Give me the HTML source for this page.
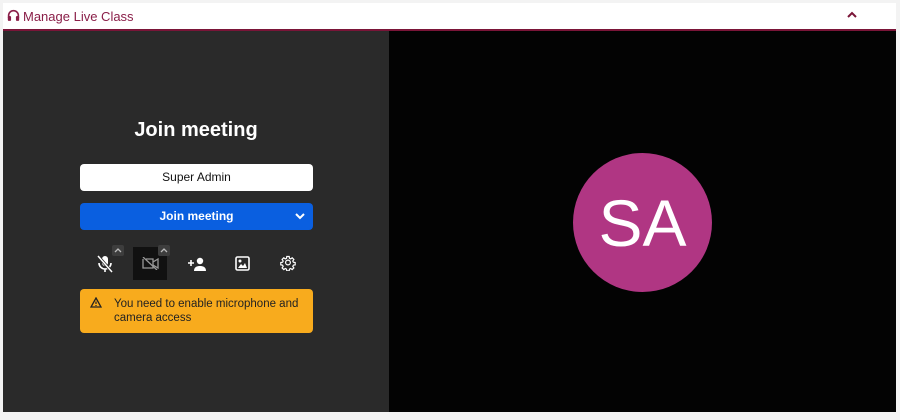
<!DOCTYPE html>
<html><head><style>
body{margin:0;width:900px;height:420px;background:#f3f3f3;font-family:"Liberation Sans",sans-serif;position:relative;overflow:hidden}
.hdr{position:absolute;left:3px;top:3px;width:893px;height:26px;background:#fff;border-bottom:2px solid #7a1538}
.hdr span{position:absolute;left:20px;top:6px;font-size:13px;color:#8a1e48}
.l{position:absolute;left:3px;top:31px;width:386px;height:381px;background:#2a2a2a}
.r{position:absolute;left:389px;top:31px;width:507px;height:381px;background:#030303}
.ab{position:absolute}
</style></head><body>
<div class="hdr">
<svg class="ab" style="left:4px;top:6px" width="13" height="13" viewBox="0 0 24 24"><path d="M3 16v-4a9 9 0 0 1 18 0v4" fill="none" stroke="#8a1e48" stroke-width="3"/><rect x="1.5" y="13" width="6" height="9" rx="2" fill="#8a1e48"/><rect x="16.5" y="13" width="6" height="9" rx="2" fill="#8a1e48"/></svg>
<span>Manage Live Class</span>
<svg class="ab" style="left:844px;top:8px" width="10" height="7" viewBox="0 0 10 7"><path d="M1 6L5 2L9 6" fill="none" stroke="#7a1538" stroke-width="2"/></svg>
</div>
<div class="l">
<div class="ab" style="left:0;width:386px;top:88px;text-align:center;color:#fff;font-weight:bold;font-size:20px">Join meeting</div>
<div class="ab" style="left:77px;top:133px;width:233px;height:27px;background:#fff;border-radius:4px;text-align:center;line-height:27px;font-size:12px;color:#111">Super Admin</div>
<div class="ab" style="left:77px;top:172px;width:233px;height:27px;background:#0a5fe0;border-radius:4px;text-align:center;line-height:27px;font-size:12px;color:#fff;font-weight:bold">Join meeting
<svg class="ab" style="left:215px;top:10px" width="10" height="7" viewBox="0 0 10 7"><path d="M1 1L5 5L9 1" fill="none" stroke="#fff" stroke-width="2"/></svg></div>
<svg class="ab" style="left:94px;top:224px" width="16" height="18" viewBox="0 0 16 18"><rect x="5" y="1" width="6" height="10" rx="3" fill="#fff"/><path d="M2 8a6 6 0 0 0 12 0M8 14v3" fill="none" stroke="#fff" stroke-width="1.6"/><path d="M1 1L15 17" stroke="#2a2a2a" stroke-width="3"/><path d="M1 1L15 17" stroke="#fff" stroke-width="1.5"/></svg>
<div class="ab" style="left:109px;top:214px;width:12px;height:11px;background:#3d3d3d;border-radius:2px"></div>
<svg class="ab" style="left:111px;top:216px" width="8" height="6"><path d="M1 5L4 2L7 5" fill="none" stroke="#bbb" stroke-width="1.3"/></svg>
<div class="ab" style="left:130px;top:216px;width:34px;height:33px;background:#111"></div>
<svg class="ab" style="left:139px;top:226px" width="17" height="13" viewBox="0 0 17 13"><path d="M4 2h7v9H1V2M11 5l5-3v9l-5-3" fill="none" stroke="#999" stroke-width="1.3"/><path d="M1 0L15 13" stroke="#999" stroke-width="1.3"/></svg>
<div class="ab" style="left:155px;top:214px;width:12px;height:11px;background:#3d3d3d;border-radius:2px"></div>
<svg class="ab" style="left:157px;top:216px" width="8" height="6"><path d="M1 5L4 2L7 5" fill="none" stroke="#bbb" stroke-width="1.3"/></svg>
<svg class="ab" style="left:185px;top:226px" width="18" height="14" viewBox="0 0 18 14"><path d="M0 6h6M3 3v6" stroke="#fff" stroke-width="1.6"/><circle cx="12" cy="4" r="3.2" fill="#fff"/><path d="M6 14c0-4 3-5 6-5s6 1 6 5z" fill="#fff"/></svg>
<svg class="ab" style="left:232px;top:225px" width="15" height="15" viewBox="0 0 15 15"><rect x="1" y="1" width="13" height="13" rx="1.5" fill="none" stroke="#fff" stroke-width="1.6"/><circle cx="5" cy="5" r="1.5" fill="#fff"/><path d="M3 12l3-4 2 2 2-3 2 5z" fill="#fff"/></svg>
<svg class="ab" style="left:277px;top:224px" width="16" height="16" viewBox="0 0 24 24"><path d="M12 8a4 4 0 1 0 0 8a4 4 0 1 0 0-8zM10 2h4l.5 3 2 1 2.5-1.8 2.8 2.8L20 9.5l1 2 3 .5v4l-3 .5-1 2 1.8 2.5-2.8 2.8-2.5-1.8-2 1-.5 3h-4l-.5-3-2-1-2.5 1.8-2.8-2.8L4 18.5l-1-2-3-.5v-4l3-.5 1-2L2.2 7l2.8-2.8L7.5 6l2-1z" fill="none" stroke="#fff" stroke-width="2" transform="scale(.9) translate(1.3 .5)"/></svg>
<div class="ab" style="left:77px;top:258px;width:233px;height:44px;background:#f8ab1d;border-radius:4px;font-size:11.5px;color:#222;line-height:14px">
<svg class="ab" style="left:10px;top:8px" width="12" height="11" viewBox="0 0 12 11"><path d="M6 1L11 10H1z" fill="none" stroke="#222" stroke-width="1.3"/><path d="M6 4.5v2.5M6 8v1" stroke="#222" stroke-width="1.2"/></svg>
<div class="ab" style="left:34px;top:8px">You need to enable microphone and<br>camera access</div></div>
</div>
<div class="r">
<div class="ab" style="left:184px;top:122px;width:139px;height:139px;border-radius:50%;background:#b03683;color:#fff;font-size:66px;text-align:center;line-height:141px">SA</div>
</div>
</body></html>
